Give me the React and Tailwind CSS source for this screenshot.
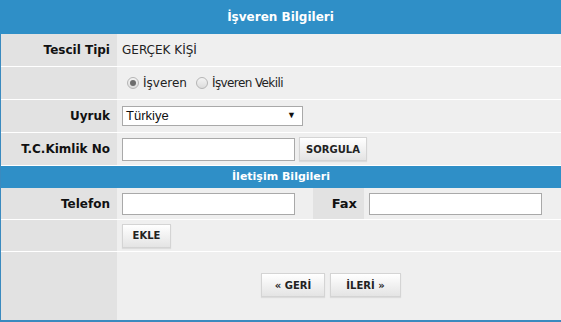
import React from 'react';

const verdana = { fontFamily: '"DejaVu Sans", Verdana, sans-serif' };

function Label({ children, className = '' }) {
  return (
    <div className={`flex items-center justify-end pr-[7px] bg-[#e2e2e2] text-[12px] font-bold text-[#111] ${className}`}>
      {children}
    </div>
  );
}

function Btn({ children, className = '' }) {
  return (
    <button className={`h-[24px] border border-[#d4d4d4] bg-gradient-to-b from-white to-[#e4e4e4] text-[10px] font-bold text-[#222] shadow-[0_1px_1px_rgba(0,0,0,0.08)] ${className}`}>
      {children}
    </button>
  );
}

function Radio({ checked }) {
  return (
    <span className="w-[12px] h-[12px] rounded-full border border-[#b5b5b5] bg-gradient-to-b from-[#f4f4f4] to-[#dcdcdc] flex items-center justify-center">
      {checked && <span className="w-[6px] h-[6px] rounded-full bg-[#6d6d6d]" />}
    </span>
  );
}

export default function App() {
  return (
    <div className="w-[561px] h-[322px] bg-[#3a8abf] overflow-hidden" style={verdana}>
      {/* Header */}
      <div className="h-[34px] bg-[#2f8fc7] flex items-center justify-center text-white text-[12px] font-bold">
        İşveren Bilgileri
      </div>

      <div className="ml-[1px] bg-[#efefef]">
        <div className="grid grid-cols-[116px_1fr] h-[33px] border-b border-white">
          <Label>Tescil Tipi</Label>
          <div className="flex items-center pl-[5px] text-[12px] text-[#222]">GERÇEK KİŞİ</div>
        </div>

        <div className="grid grid-cols-[116px_1fr] h-[33px] border-b border-white">
          <Label />
          <div className="flex items-center pl-[10px] text-[12px] text-[#222]">
            <Radio checked />
            <span className="ml-[4px]">İşveren</span>
            <span className="ml-[9px]"><Radio /></span>
            <span className="ml-[4px] tracking-[-0.6px]">İşveren Vekili</span>
          </div>
        </div>

        <div className="grid grid-cols-[116px_1fr] h-[33px] border-b border-white">
          <Label>Uyruk</Label>
          <div className="flex items-center pl-[5px]">
            <div className="w-[181px] h-[20px] bg-white border border-[#a9a9a9] flex items-center justify-between pl-[3px] pr-[6px] text-[13px] text-[#111]" style={{ fontFamily: '"Liberation Sans", Arial, sans-serif' }}>
              <span>Türkiye</span>
              <span className="text-[9px]">▼</span>
            </div>
          </div>
        </div>

        <div className="grid grid-cols-[116px_1fr] h-[33px] border-b border-white">
          <Label>T.C.Kimlik No</Label>
          <div className="flex items-center pl-[5px] gap-[4px]">
            <div className="w-[173px] h-[23px] bg-white border border-[#a9a9a9]" />
            <Btn className="w-[68px]">SORGULA</Btn>
          </div>
        </div>

        <div className="h-[22px] bg-[#2f8fc7] flex items-center justify-center text-white text-[11px] font-bold">
          İletişim Bilgileri
        </div>

        <div className="grid grid-cols-[116px_196px_51px_1fr] h-[32px] border-b border-white">
          <Label>Telefon</Label>
          <div className="flex items-center pl-[5px]">
            <div className="w-[173px] h-[22px] bg-white border border-[#a9a9a9]" />
          </div>
          <Label className="pr-[4px] text-[13px]">Fax</Label>
          <div className="flex items-center pl-[5px]">
            <div className="w-[173px] h-[22px] bg-white border border-[#a9a9a9]" />
          </div>
        </div>

        <div className="grid grid-cols-[116px_1fr] h-[32px] border-b border-white">
          <Label />
          <div className="flex items-center pl-[5px]">
            <Btn className="w-[49px]">EKLE</Btn>
          </div>
        </div>

        <div className="grid grid-cols-[116px_1fr] h-[68px]">
          <Label />
          <div className="flex items-center justify-center gap-[5px] pr-[16px] pb-[2px]">
            <Btn className="w-[64px]">« GERİ</Btn>
            <Btn className="w-[71px]">İLERİ »</Btn>
          </div>
        </div>
      </div>
    </div>
  );
}
